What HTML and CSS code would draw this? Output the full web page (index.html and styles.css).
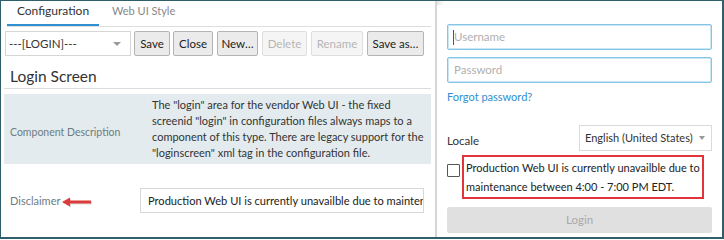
FILE: index.html
```html
<!DOCTYPE html>
<html>
<head>
<meta charset="utf-8">
<link rel="stylesheet" href="styles.css">
</head>
<body>
<div class="frame">
  <div class="left">
    <div class="tabs">
      <div class="tab active">Configuration</div>
      <div class="tab">Web UI Style</div>
    </div>
    <div class="toolbar">
      <div class="select">---[LOGIN]---<span class="caret"></span></div>
      <button class="btn b-save">Save</button>
      <button class="btn b-close">Close</button>
      <button class="btn b-new">New…</button>
      <button class="btn b-delete disabled">Delete</button>
      <button class="btn b-rename disabled">Rename</button>
      <button class="btn b-saveas">Save as…</button>
    </div>
    <div class="heading">Login Screen</div>
    <div class="desc">
      <div class="desc-label">Component Description</div>
      <div class="desc-text">The "login" area for the vendor Web UI - the fixed screenid "login" in configuration files always maps to a component of this type. There are legacy support for the "loginscreen" xml tag in the configuration file.</div>
    </div>
    <div class="disc-row">
      <div class="disc-label">Disclaimer<svg class="arrow" width="32" height="12" viewBox="0 0 32 12"><path d="M1 6 L9 1.5 L9 4.5 L30 4.5 L30 7.5 L9 7.5 L9 10.5 Z" fill="#9a9a9a" opacity="0.35" transform="translate(1,1)"/><path d="M1 6 L9 1.5 L9 4.5 L30 4.5 L30 7.5 L9 7.5 L9 10.5 Z" fill="#dc3b3b"/></svg></div>
      <div class="disc-input">Production Web UI is currently unavailble due to maintenance between 4:00 - 7:00 PM EDT.</div>
    </div>
  </div>
  <div class="sep"></div>
  <div class="right">
    <div class="input focus"><span class="cursor"></span>Username</div>
    <div class="input">Password</div>
    <div class="forgot">Forgot password?</div>
    <div class="locale-row">
      <div class="locale-label">Locale</div>
      <div class="locale-select">English (United States)<span class="caret small"></span></div>
    </div>
    <div class="check-row">
      <span class="checkbox"></span>
      <div class="notice">Production Web UI is currently unavailble due to maintenance between 4:00 - 7:00 PM EDT.</div>
    </div>
    <div class="login-btn">Login</div>
  </div>
</div>
</body>
</html>
```
FILE: styles.css
```css
html, body {
  margin: 0;
  padding: 0;
  background: #fff;
}
body {
  font-family: "Lato", "Open Sans", sans-serif;
  color: #333;
  font-size: 11px;
}
.frame {
  width: 724px;
  height: 239px;
  box-sizing: border-box;
  border: 1px solid #2f5f6a;
  border-right-width: 2px;
  border-bottom-width: 2px;
  display: flex;
  overflow: hidden;
}
.left {
  width: 433px;
  flex: none;
  padding: 0 3px 0 3px;
  box-sizing: border-box;
}
.sep {
  width: 2px;
  flex: none;
  background: #d6d6d6;
  margin-left: 1px;
}
.right {
  flex: 1;
  padding: 23px 10px 0 10px;
  box-sizing: border-box;
  background: linear-gradient(90deg, #e6e6e6, #fff 8px) no-repeat 0 0 / 10px 4px;
}
.tabs {
  display: flex;
  height: 25px;
  border-bottom: 1px solid #dedede;
  margin-left: 3px;
}
.tab {
  line-height: 19px;
  color: #888;
  height: 25px;
  box-sizing: border-box;
  padding-left: 13px;
  font-size: 11px;
}
.tab.active {
  color: #333;
  border-bottom: 2px solid #2f8fd3;
  width: 92px;
  text-align: center;
  padding: 0;
  font-size: 12px;
}
.toolbar {
  display: flex;
  margin-top: 4px;
  height: 25px;
  align-items: stretch;
}
.select {
  width: 126px;
  flex: none;
  box-sizing: border-box;
  border: 1px solid #d6d6d6;
  font-size: 11.5px;
  line-height: 23px;
  padding-left: 3px;
  color: #333;
  position: relative;
  margin-left: 1px;
  margin-right: 3px;
}
.caret {
  position: absolute;
  right: 9px;
  top: 10px;
  width: 0;
  height: 0;
  border-left: 4px solid transparent;
  border-right: 4px solid transparent;
  border-top: 4px solid #999;
}
.caret.small { right: 6px; border-left-width: 3.5px; border-right-width: 3.5px; }
.btn {
  font-family: inherit;
  font-size: 11.5px;
  color: #222;
  background: #ebebeb;
  border: 1px solid #b4b4b4;
  border-radius: 2px;
  padding: 0;
  margin: 0 4px 0 0;
  height: 25px;
  box-sizing: border-box;
  white-space: nowrap;
  flex: none;
  text-align: center;
}
.b-save { width: 36px; margin-right: 3px; }
.b-close { width: 40px; margin-right: 4px; }
.b-new { width: 41px; }
.b-delete { width: 45px; }
.b-rename { width: 52px; }
.b-saveas { width: 57px; }
.btn.disabled {
  color: #b5b5b5;
  background: #f5f5f5;
  border-color: #dedede;
}
.heading {
  font-size: 15.5px;
  color: #333;
  margin-top: 9px;
  padding-left: 6px;
  height: 23px;
  line-height: 22px;
  border-bottom: 1px solid #dcdcdc;
}
.desc {
  margin-top: 5px;
  background: #e3ebee;
  display: flex;
  align-items: center;
  height: 70px;
}
.desc-label {
  width: 148px;
  flex: none;
  padding-left: 6px;
  box-sizing: border-box;
  font-size: 10.5px;
  color: #6d7c82;
  padding-top: 5px;
}
.desc-text {
  font-size: 11px;
  line-height: 16px;
  color: #333;
  padding-right: 4px;
}
.disc-row {
  display: flex;
  align-items: center;
  margin-top: 24px;
}
.disc-label {
  width: 136px;
  flex: none;
  padding-left: 6px;
  box-sizing: border-box;
  font-size: 11px;
  color: #6d7c82;
  display: flex;
  align-items: center;
}
.arrow { margin-left: 1px; margin-top: 2px; }
.disc-input {
  width: 284px;
  height: 25px;
  box-sizing: border-box;
  border: 1px solid #d8d8d8;
  font-size: 11.1px;
  line-height: 23px;
  padding-left: 7px;
  white-space: nowrap;
  overflow: hidden;
  color: #222;
}
.input {
  height: 26px;
  box-sizing: border-box;
  border: 1px solid #86c5e6;
  border-radius: 2px;
  box-shadow: inset 0 0 0 1px #c9e6f5;
  font-size: 11.5px;
  line-height: 24px;
  padding-left: 6px;
  color: #b0b0b0;
  margin-bottom: 7px;
  position: relative;
}
.cursor {
  position: absolute;
  left: 5px;
  top: 5px;
  width: 1px;
  height: 15px;
  background: #555;
}
.forgot {
  font-size: 11px;
  color: #2f8fcf;
  margin-top: 2px;
}
.locale-row {
  display: flex;
  align-items: center;
  justify-content: space-between;
  margin-top: 22px;
}
.locale-label {
  font-size: 11.5px;
  color: #333;
  padding-top: 4px;
}
.locale-select {
  width: 133px;
  height: 26px;
  box-sizing: border-box;
  border: 1px solid #dadada;
  font-size: 11px;
  line-height: 24px;
  padding-left: 5px;
  position: relative;
  color: #333;
}
.check-row {
  display: flex;
  align-items: flex-start;
  margin-top: 4px;
}
.checkbox {
  width: 11px;
  height: 11px;
  border: 1px solid #555;
  border-radius: 1px;
  margin-top: 9px;
  flex: none;
}
.notice {
  margin-left: 2px;
  border: 2px solid #e2343b;
  width: 242px;
  box-sizing: border-box;
  font-size: 11px;
  line-height: 19px;
  padding: 1px 0 1px 2px;
  color: #222;
}
.login-btn {
  margin-top: 8px;
  height: 26px;
  background: #e0e0e0;
  border-radius: 2px;
  text-align: center;
  font-size: 11.5px;
  line-height: 26px;
  color: #aaa;
}
```
